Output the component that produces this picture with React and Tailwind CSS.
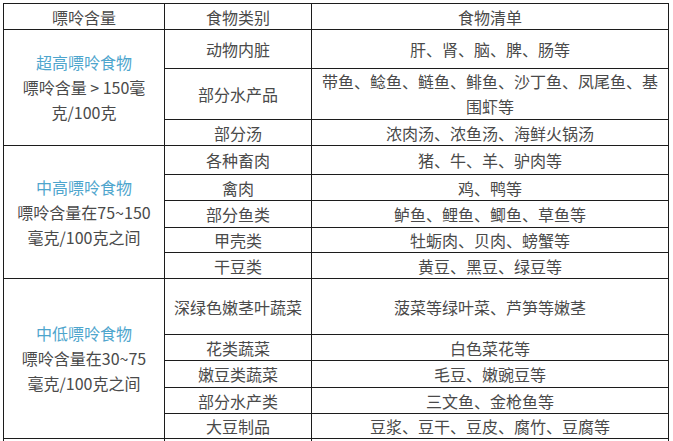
import React from "react";

const B = "border border-[#1c1c1c]";
const cell = `${B} text-center align-middle p-0`;

function Cat({ title, lines }) {
  return (
    <div className="leading-[25px]">
      <div className="text-[#4ea5cd]">{title}</div>
      {lines.map((l, i) => (
        <div key={i}>{l}</div>
      ))}
    </div>
  );
}

const groups = [
  {
    title: "超高嘌呤食物",
    lines: ["嘌呤含量 > 150毫", "克/100克"],
    rows: [
      { h: "h-[39px]", a: "动物内脏", b: ["肝、肾、脑、脾、肠等"] },
      { h: "h-[50px]", a: "部分水产品", b: ["带鱼、鲶鱼、鲢鱼、鲱鱼、沙丁鱼、凤尾鱼、基", "围虾等"] },
      { h: "h-[26px]", a: "部分汤", b: ["浓肉汤、浓鱼汤、海鲜火锅汤"] },
    ],
  },
  {
    title: "中高嘌呤食物",
    lines: ["嘌呤含量在75~150", "毫克/100克之间"],
    rows: [
      { h: "h-[29px]", a: "各种畜肉", b: ["猪、牛、羊、驴肉等"] },
      { h: "h-[26px]", a: "禽肉", b: ["鸡、鸭等"] },
      { h: "h-[27px]", a: "部分鱼类", b: ["鲈鱼、鲤鱼、鲫鱼、草鱼等"] },
      { h: "h-[25px]", a: "甲壳类", b: ["牡蛎肉、贝肉、螃蟹等"] },
      { h: "h-[26px]", a: "干豆类", b: ["黄豆、黑豆、绿豆等"] },
    ],
  },
  {
    title: "中低嘌呤食物",
    lines: ["嘌呤含量在30~75", "毫克/100克之间"],
    rows: [
      { h: "h-[56px]", a: "深绿色嫩茎叶蔬菜", b: ["菠菜等绿叶菜、芦笋等嫩茎"] },
      { h: "h-[26px]", a: "花类蔬菜", b: ["白色菜花等"] },
      { h: "h-[27px]", a: "嫩豆类蔬菜", b: ["毛豆、嫩豌豆等"] },
      { h: "h-[26px]", a: "部分水产类", b: ["三文鱼、金枪鱼等"] },
      { h: "h-[25px]", a: "大豆制品", b: ["豆浆、豆干、豆皮、腐竹、豆腐等"] },
    ],
  },
];

export default function App() {
  return (
    <div
      className="w-[673px] h-[441px] overflow-hidden bg-white text-[#4a4a4a] text-[16px] pt-[3px] pl-[3px]"
      style={{ fontFamily: '"Noto Sans CJK SC", "Noto Sans", sans-serif' }}
    >
      <table className="table-fixed border-collapse w-[665px]">
        <colgroup>
          <col className="w-[161px]" />
          <col className="w-[147px]" />
          <col className="w-[357px]" />
        </colgroup>
        <tbody>
          <tr>
            <td className={`${cell} h-[26px] leading-[22px]`}>嘌呤含量</td>
            <td className={`${cell} h-[26px] leading-[22px]`}>食物类别</td>
            <td className={`${cell} h-[26px] leading-[22px]`}>食物清单</td>
          </tr>
          {groups.map((g, gi) =>
            g.rows.map((r, ri) => (
              <tr key={`${gi}-${ri}`}>
                {ri === 0 && (
                  <td className={cell} rowSpan={g.rows.length}>
                    <Cat title={g.title} lines={g.lines} />
                  </td>
                )}
                <td className={`${cell} ${r.h} leading-[22px]`}>{r.a}</td>
                <td
                  className={`${cell} ${r.h} ${
                    r.b.length > 1 ? "leading-[25px]" : "leading-[22px]"
                  }`}
                >
                  {r.b.map((t, i) => (
                    <div key={i}>{t}</div>
                  ))}
                </td>
              </tr>
            ))
          )}
          <tr>
            <td className={`${cell} h-[30px]`}></td>
            <td className={`${cell} h-[30px]`}></td>
            <td className={`${cell} h-[30px]`}></td>
          </tr>
        </tbody>
      </table>
    </div>
  );
}
